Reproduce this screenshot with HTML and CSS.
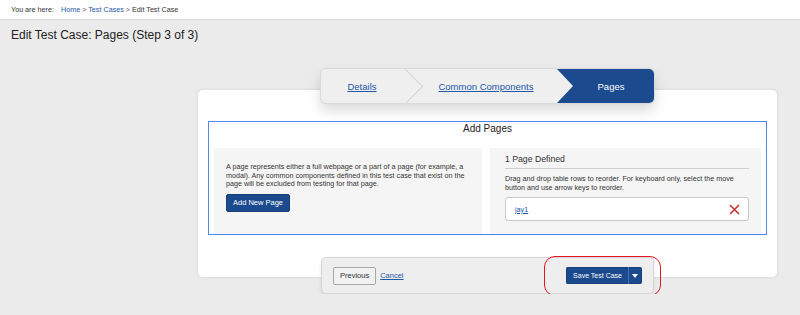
FILE: index.html
```html
<!DOCTYPE html>
<html lang="en">
<head>
    <meta charset="UTF-8">
    <meta name="viewport" content="width=device-width, initial-scale=1.0">
    <title>Edit Test Case: Pages</title>
    <link rel="stylesheet" href="styles.css">
</head>
<body>
    <div class="topbar">
        <span class="here">You are here:</span>
        <nav class="crumbs">
            <a href="#">Home</a> <span class="sep">&gt;</span>
            <a href="#">Test Cases</a> <span class="sep">&gt;</span>
            <span>Edit Test Case</span>
        </nav>
    </div>

    <h1 class="page-title">Edit Test Case: Pages (Step 3 of 3)</h1>

    <div class="content">
        <div class="card">
            <!-- wizard steps -->
            <div class="stepper">
                <a href="#" class="step step-first">Details</a>
                <a href="#" class="step step-mid">Common Components</a>
                <span class="step step-current">Pages</span>
            </div>

            <div class="pages-box">
                <h2 class="box-title">Add Pages</h2>
                <div class="panels">
                    <div class="panel panel-left">
                        <p class="small-text">A page represents either a full webpage or a part of a page (for example, a modal). Any common components defined in this test case that exist on the page will be excluded from testing for that page.</p>
                        <button class="button primary">Add New Page</button>
                    </div>
                    <div class="panel panel-right">
                        <h3 class="panel-title">1 Page Defined</h3>
                        <p class="small-text desc">Drag and drop table rows to reorder. For keyboard only, select the move button and use arrow keys to reorder.</p>
                        <div class="page-row">
                            <a href="#" class="page-link">jay1</a>
                            <button class="remove" aria-label="Remove jay1">
                                <svg width="11" height="11" viewBox="0 0 11 11"><path d="M1 1 L10 10 M10 1 L1 10" stroke="#c8302c" stroke-width="1.5" fill="none"/></svg>
                            </button>
                        </div>
                    </div>
                </div>
            </div>
        </div>

        <!-- actions -->
        <div class="actions">
            <div class="actions-left">
                <button class="button secondary">Previous</button>
                <a href="#" class="cancel">Cancel</a>
            </div>
            <div class="save-wrap">
                <div class="save-group">
                    <button class="button primary save">Save Test Case</button>
                    <button class="button primary caret" aria-label="More save options">
                        <svg width="6" height="4" viewBox="0 0 6 4"><path d="M0 0 H6 L3 4 Z" fill="#fff"/></svg>
                    </button>
                </div>
                <span class="highlight"></span>
            </div>
        </div>
    </div>
</body>
</html>
```

FILE: styles.css
```css
body {
    font-family: "Liberation Sans", Arial, sans-serif;
    background-color: #ebebeb;
    color: #333;
    margin: 0;
    padding: 0;
}
a {
    color: #2257a8;
}
.topbar {
    height: 19px;
    background-color: #ffffff;
    border-bottom: 1px solid #dcdcdc;
    display: flex;
    align-items: center;
    padding-left: 11px;
    font-size: 7.2px;
}
.here {
    width: 50px;
    color: #333;
}
.crumbs a {
    text-decoration: none;
}
.crumbs .sep {
    color: #555;
}
.page-title {
    font-size: 12px;
    font-weight: normal;
    line-height: 14px;
    color: #222;
    margin: 8px 0 0 11px;
}
.content {
    width: 581px;
    margin: 47px 0 0 197px;
}
.card {
    background-color: #ffffff;
    border: 1px solid #e2e2e2;
    border-radius: 6px;
    box-shadow: 0 0 2px rgba(0, 0, 0, 0.08);
    padding: 0 10px 42px;
}
.stepper {
    position: relative;
    z-index: 1;
    width: 333px;
    height: 34px;
    margin: -21px auto 18px;
    display: flex;
    background-color: #efefef;
    border-radius: 5px;
    overflow: hidden;
    box-shadow: 0 0 0 1px #dadada, 0 7px 14px rgba(0, 0, 0, 0.16);
    font-size: 9.5px;
}
.step {
    display: flex;
    align-items: center;
    justify-content: center;
    height: 100%;
    box-sizing: border-box;
}
.step-first {
    position: relative;
    width: 94px;
    padding-right: 12px;
}
.step-first::after {
    content: "";
    position: absolute;
    top: 5px;
    left: 72px;
    width: 24px;
    height: 24px;
    border-top: 1px solid #d6d6d6;
    border-right: 1px solid #d6d6d6;
    transform: rotate(45deg);
}
.step-mid {
    width: 142px;
}
.step-current {
    width: 97px;
    padding-left: 11px;
    background-color: #1b4a8e;
    color: #ffffff;
    clip-path: polygon(0 0, 100% 0, 100% 100%, 0 100%, 16px 50%);
}
.pages-box {
    border: 1px solid #4f88ef;
    padding: 0 5px;
}
.box-title {
    font-size: 10px;
    font-weight: normal;
    line-height: 12px;
    text-align: center;
    color: #222;
    margin: 1px 0 13px;
}
.panels {
    display: flex;
    gap: 8px;
    height: 86px;
}
.panel {
    background-color: #f5f5f5;
    box-sizing: border-box;
}
.panel-left {
    width: 268px;
    padding: 15px 12px 0;
}
.panel-right {
    width: 271px;
    padding: 6px 12px 0 15px;
}
.small-text {
    font-size: 7.2px;
    line-height: 8.6px;
    margin: 0;
    color: #333;
}
.button {
    font-family: inherit;
    border-radius: 2px;
    cursor: pointer;
}
.primary {
    background-color: #1b4a8e;
    color: #ffffff;
    border: 1px solid #173f7a;
}
.panel-left .primary {
    margin-top: 5px;
    height: 18px;
    padding: 0 6px;
    font-size: 7.5px;
}
.panel-title {
    font-size: 8.7px;
    font-weight: normal;
    line-height: 10px;
    margin: 0;
    padding-bottom: 4px;
    border-bottom: 1px solid #cfcfcf;
}
.desc {
    margin-top: 6px;
}
.page-row {
    margin-top: 5px;
    height: 24px;
    box-sizing: border-box;
    background-color: #ffffff;
    border: 1px solid #c9c9c9;
    border-radius: 3px;
    display: flex;
    align-items: center;
    justify-content: space-between;
    padding: 0 8px 0 9px;
}
.page-link {
    font-size: 7.2px;
}
.remove {
    background: none;
    border: none;
    padding: 0;
    display: flex;
}
.actions {
    position: relative;
    width: 333px;
    height: 37px;
    box-sizing: border-box;
    margin: -21px auto 0;
    background-color: #eeeeee;
    border: 1px solid #d6d6d6;
    border-radius: 5px;
    box-shadow: 0 2px 4px rgba(0, 0, 0, 0.08);
    display: flex;
    align-items: center;
    justify-content: space-between;
    padding: 0 11px;
}
.actions-left {
    display: flex;
    align-items: center;
    gap: 4px;
}
.secondary {
    height: 18px;
    padding: 0 6px;
    background-color: #f1f1f1;
    color: #333;
    border: 1px solid #a9a9a9;
    font-size: 7.5px;
}
.cancel {
    font-size: 7.5px;
}
.save-wrap {
    position: relative;
}
.save-group {
    display: flex;
    height: 17px;
}
.save {
    font-size: 7px;
    padding: 0 6px;
    border-radius: 2px 0 0 2px;
    border-right: 1px solid #4b6fa8;
}
.caret {
    width: 13px;
    padding: 0;
    border-left: none;
    border-radius: 0 2px 2px 0;
    display: flex;
    align-items: center;
    justify-content: center;
}
.highlight {
    position: absolute;
    top: -11px;
    left: -22px;
    right: -19px;
    bottom: -12px;
    border: 1.5px solid #e3151f;
    border-radius: 11px;
    pointer-events: none;
}
```
